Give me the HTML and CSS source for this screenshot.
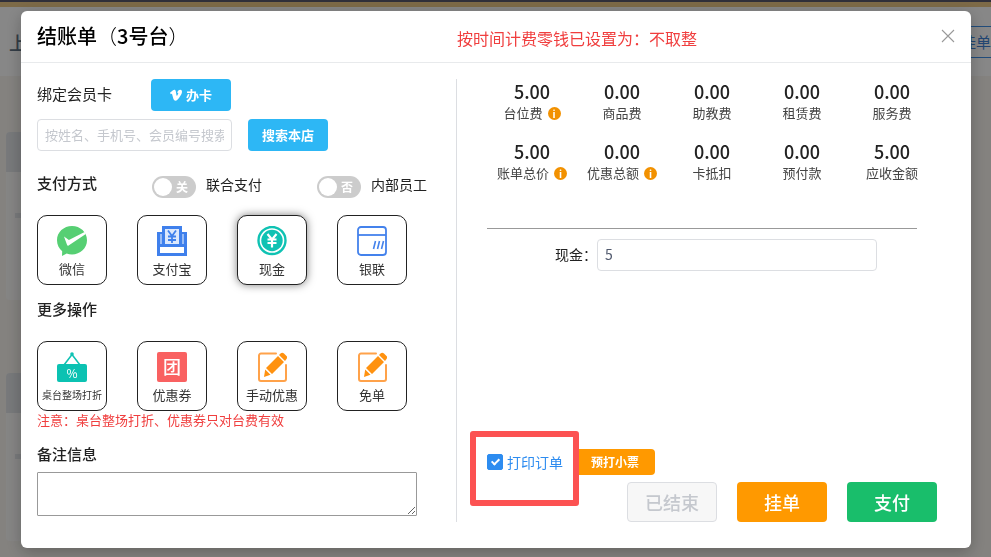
FILE: index.html
```
<!DOCTYPE html>
<html lang="zh-CN">
  <head>
    <meta charset="UTF-8" />
    <meta name="viewport" content="width=device-width, initial-scale=1.0" />
    <title>结账单</title>
    <link rel="stylesheet" href="styles.css">
  </head>
  <body>
    <!-- page under the dialog -->
    <div class="page" aria-hidden="true">
      <div class="topbar"></div>
      <div class="toolbar">
        <span class="toolbar-title">上</span>
        <span class="toolbar-btn">挂单</span>
      </div>
      <div class="tables">
        <div class="table-card"><div class="table-head"></div><div class="table-seat"></div></div>
        <div class="table-card"><div class="table-head"></div><div class="table-seat"></div></div>
      </div>
    </div>

    <div class="overlay">
      <div class="modal" role="dialog" aria-labelledby="modalTitle">
        <div class="modal-header">
          <h1 id="modalTitle">结账单<span class="thin">（</span>3号台<span class="thin">）</span></h1>
          <p class="tip">按时间计费零钱已设置为：不取整</p>
          <button type="button" class="close" id="closeBtn" aria-label="关闭">
            <svg width="14" height="14" viewBox="0 0 14 14" fill="none" stroke="#999" stroke-width="1.1">
              <path d="M1 1l12 12M13 1l-12 12" />
            </svg>
          </button>
        </div>

        <div class="modal-body">
          <div class="left">
            <div class="card-row">
              <label for="member">绑定会员卡</label>
              <button type="button" class="btn btn-blue">
                <svg width="12" height="12" viewBox="0 0 24 24" fill="#fff">
                  <path d="M0 7.500L6 2.600c2.800-2 5-1.300 5.700 2.200l1.100 7.200c.5 2 1 2 2 .4l1.300-2.600c1-2-.2-2.600-2-1.900C15.500 3.500 18 1.500 20.700 1.700c2.600.2 3.600 2 3.200 5-.5 4.300-6 12.500-9.500 15.500-2.900 2.200-6.600 1.200-7.700-2.700L4.200 10.300c-.4-1.400-1.300-1-2.600 0z" />
                </svg>
                办卡
              </button>
            </div>
            <div class="search-row">
              <input type="text" id="member" class="input" placeholder="按姓名、手机号、会员编号搜索" />
              <button type="button" class="btn btn-blue">搜索本店</button>
            </div>

            <div class="pay-row">
              <h2>支付方式</h2>
              <label class="switch">
                <span class="switch-box"><input type="checkbox" role="switch" /><span class="switch-text">关</span></span>
                联合支付
              </label>
              <label class="switch">
                <span class="switch-box"><input type="checkbox" role="switch" /><span class="switch-text">否</span></span>
                内部员工
              </label>
            </div>

            <div class="tiles" id="payTiles">
              <button type="button" class="tile">
                <svg width="30" height="30" viewBox="0 0 30 30">
                  <path fill="#56cf73" d="M15 0C23.300 0 30 6.200 30 14.200S23.300 28.400 15 28.400c-2 0-3.700-.3-5.300-.9L5 30l.2-4.700C2 22.600 0 18.700 0 14.200 0 6.200 6.700 0 15 0z" />
                  <path fill="#fff" d="M7 10.600l4.900 3.300L27.600 6l1.200 1.900L11.600 19.600c-.7.400-1.200.2-1.500-.5z" />
                </svg>
                <span>微信</span>
              </button>
              <button type="button" class="tile">
                <svg width="30" height="30" viewBox="0 0 30 30">
                  <path fill="#3f80ec" d="M5 0h20v6h5v24H0V6h5z" />
                  <path fill="#dce8fc" d="M8 3h14v15H8z" />
                  <path fill="#fff" d="M3 21h24v6H3z" />
                  <path stroke="#b9d1f9" stroke-width="1.500" d="M4 8v10M26 8v10" />
                  <path fill="none" stroke="#3f80ec" stroke-width="1.800" d="M11 4.500l4 5.500 4-5.500M15 10v7M11 10.500h8M11 14h8" />
                </svg>
                <span>支付宝</span>
              </button>
              <button type="button" class="tile active">
                <svg width="30" height="30" viewBox="0 0 30 30">
                  <circle cx="15" cy="14.500" r="13.500" fill="#fff" stroke="#0fc2b3" stroke-width="2.400" />
                  <circle cx="15" cy="14.500" r="10.700" fill="#0fc2b3" />
                  <path fill="none" stroke="#fff" stroke-width="2.200" d="M10.500 8l4.500 5.500L19.500 8M15 13.500v8M10.500 13.500h9M10.500 17h9" />
                </svg>
                <span>现金</span>
              </button>
              <button type="button" class="tile">
                <svg width="30" height="30" viewBox="0 0 30 30" fill="none" stroke="#4482ec" stroke-width="1.800">
                  <rect x="1" y="1" width="28" height="28" rx="3" />
                  <path d="M1 9h28" />
                  <path stroke-width="1.600" d="M18.500 15l-2 8M22.500 15l-2 8M26.500 15l-2 8" />
                </svg>
                <span>银联</span>
              </button>
            </div>

            <h2 class="more-title">更多操作</h2>
            <div class="tiles">
              <button type="button" class="tile">
                <svg width="30" height="30" viewBox="0 0 30 30">
                  <path fill="none" stroke="#0fc2b3" stroke-width="1.600" d="M7 13l8-10.500L23 13" />
                  <circle cx="15" cy="2" r="1.800" fill="#0fc2b3" />
                  <rect y="12" width="30" height="18" rx="2" fill="#0bc2b2" />
                  <text x="15" y="25.500" text-anchor="middle" font-size="12" fill="#fff">%</text>
                </svg>
                <span class="small">桌台整场打折</span>
              </button>
              <button type="button" class="tile">
                <svg width="30" height="30" viewBox="0 0 30 30">
                  <rect width="30" height="30" rx="2" fill="#f96161" />
                  <text x="15" y="21.500" text-anchor="middle" font-size="18" font-weight="500" fill="#fff">团</text>
                </svg>
                <span>优惠券</span>
              </button>
              <button type="button" class="tile">
                <svg width="30" height="30" viewBox="0 0 30 30">
                  <path fill="none" stroke="#ffa24a" stroke-width="2" stroke-linecap="round" d="M19 1.500H4a2 2 0 0 0-2 2V27a2 2 0 0 0 2 2h23a2 2 0 0 0 2-2V13" />
                  <path fill="#ff9210" d="M21 4l6 6-12 12-6-6zM8.200 17.500l5.300 5.300L7 25zM22 3l1.500-1.500c1-1 2.500-1 3.500 0L29.500 4c1 1 1 2 0 3L28 9z" />
                </svg>
                <span>手动优惠</span>
              </button>
              <button type="button" class="tile">
                <svg width="30" height="30" viewBox="0 0 30 30">
                  <path fill="none" stroke="#ffa24a" stroke-width="2" stroke-linecap="round" d="M19 1.500H4a2 2 0 0 0-2 2V27a2 2 0 0 0 2 2h23a2 2 0 0 0 2-2V13" />
                  <path fill="#ff9210" d="M21 4l6 6-12 12-6-6zM8.200 17.500l5.300 5.300L7 25zM22 3l1.500-1.500c1-1 2.500-1 3.500 0L29.500 4c1 1 1 2 0 3L28 9z" />
                </svg>
                <span>免单</span>
              </button>
            </div>
            <p class="note">注意：桌台整场打折、优惠券只对台费有效</p>

            <label for="remark" class="remark-title">备注信息</label>
            <textarea id="remark"></textarea>
          </div>

          <div class="right">
            <dl class="amounts">
              <div><dd>5.00</dd><dt>台位费 <span class="info">i</span></dt></div>
              <div><dd>0.00</dd><dt>商品费</dt></div>
              <div><dd>0.00</dd><dt>助教费</dt></div>
              <div><dd>0.00</dd><dt>租赁费</dt></div>
              <div><dd>0.00</dd><dt>服务费</dt></div>
              <div><dd>5.00</dd><dt>账单总价 <span class="info">i</span></dt></div>
              <div><dd>0.00</dd><dt>优惠总额 <span class="info">i</span></dt></div>
              <div><dd>0.00</dd><dt>卡抵扣</dt></div>
              <div><dd>0.00</dd><dt>预付款</dt></div>
              <div><dd>5.00</dd><dt>应收金额</dt></div>
            </dl>
            <hr />
            <div class="cash-row">
              <label for="cash">现金：</label>
              <input type="text" id="cash" class="input" value="5" />
            </div>

            <div class="print-row">
              <label class="print">
                <input type="checkbox" checked />
                打印订单
              </label>
              <button type="button" class="btn btn-orange btn-small">预打小票</button>
              <span class="mark"></span>
            </div>
            <div class="actions">
              <button type="button" class="btn btn-large" disabled>已结束</button>
              <button type="button" class="btn btn-large btn-orange">挂单</button>
              <button type="button" class="btn btn-large btn-green">支付</button>
            </div>
          </div>
        </div>
      </div>
    </div>

    <script>
      // Select payment method
      document.querySelectorAll("#payTiles .tile").forEach((tile) => {
        tile.addEventListener("click", function () {
          document.querySelector("#payTiles .active").classList.remove("active");
          this.classList.add("active");
        });
      });

      // Close dialog
      document
        .getElementById("closeBtn")
        .addEventListener("click", function () {
          document.querySelector(".overlay").style.display = "none";
        });
    </script>
  </body>
</html>
```

FILE: styles.css
```
* {
  margin: 0;
  padding: 0;
  box-sizing: border-box;
}

body {
  font-family: "Noto Sans CJK SC", "Noto Sans", sans-serif;
  font-size: 14px;
  line-height: 20px;
  color: #222;
  background: #f0ede8;
}

button,
input,
textarea {
  font-family: inherit;
}

button {
  cursor: pointer;
}

/* page behind */
.page {
  position: fixed;
  inset: 0;
  overflow: hidden;
}

.topbar {
  height: 7px;
  background: #e3c182;
  border-top: 2px solid #56566a;
}

.toolbar {
  display: flex;
  align-items: center;
  justify-content: space-between;
  height: 69px;
  padding-left: 9px;
  background: #f6f6f6;
}

.toolbar-title {
  font-size: 18px;
  font-weight: 500;
  color: #5d6f80;
}

.toolbar-btn {
  padding: 5px 0 5px 30px;
  border: 1px solid #3d8be0;
  border-right: none;
  font-size: 15px;
  color: #3d7fd0;
}

.tables {
  display: flex;
  flex-direction: column;
  gap: 73px;
  padding: 56px 6px;
}

.table-card {
  width: 160px;
  height: 168px;
  border-radius: 4px;
  background: #f3f2f1;
  overflow: hidden;
}

.table-head {
  height: 40px;
  background: #dadde0;
}

.table-seat {
  width: 40px;
  height: 5px;
  margin: 41px 9px;
  background: #dcdfe2;
}

/* dialog */
.overlay {
  position: relative;
  min-height: 100vh;
  padding: 11px 20px 9px 21px;
  background: rgba(0, 0, 0, 0.45);
}

.modal {
  border-radius: 6px;
  background: #fff;
  box-shadow: 0 4px 16px rgba(0, 0, 0, 0.25);
}

.modal-header {
  display: flex;
  align-items: center;
  height: 52px;
  padding: 0 16px 2px;
  border-bottom: 1px solid #e8eaec;
}

.modal-header h1 {
  flex: 0 0 420px;
  font-size: 20px;
  line-height: 28px;
  font-weight: 500;
  color: #000;
}

.thin {
  font-weight: 300;
}

.tip {
  flex: 1;
  padding-top: 4px;
  font-size: 16px;
  color: #f03e3e;
}

.close {
  display: flex;
  border: none;
  background: none;
}

.modal-body {
  display: flex;
  padding: 16px 16px 26px;
}

.left {
  flex: 0 0 420px;
  border-right: 1px solid #dcdee2;
}

.right {
  flex: 1;
  display: flex;
  flex-direction: column;
  padding: 0 18px 0 30px;
}

.btn {
  display: inline-flex;
  align-items: center;
  justify-content: center;
  gap: 4px;
  width: 80px;
  height: 32px;
  padding-bottom: 1px;
  border: none;
  border-radius: 4px;
  color: #fff;
  font-size: 13px;
  font-weight: 700;
}

.btn-blue {
  background: #2db7f5;
}

.btn-orange {
  background: #ff9900;
}

.btn-green {
  background: #19be6b;
}

.btn-small {
  height: 26px;
  font-size: 12px;
}

.btn-large {
  width: 90px;
  height: 40px;
  font-size: 18px;
  font-weight: 500;
}

.btn:disabled {
  border: 1px solid #dcdee2;
  background: #f7f7f7;
  color: #c5c8ce;
  cursor: not-allowed;
}

.input {
  height: 32px;
  padding: 0 7px 2px;
  border: 1px solid #dcdee2;
  border-radius: 4px;
  font-size: 14px;
  color: #515a6e;
}

.input:focus {
  outline: none;
  border-color: #2db7f5;
}

.input::placeholder {
  color: #c5c8ce;
}

.card-row {
  display: flex;
  align-items: center;
  margin-bottom: 8px;
  font-size: 15px;
}

.card-row label {
  width: 114px;
  padding-bottom: 2px;
}

.search-row {
  display: flex;
  gap: 16px;
}

.search-row .input {
  width: 195px;
  font-size: 13px;
}

h2,
.remark-title {
  font-size: 15px;
  line-height: 20px;
  font-weight: 500;
}

.pay-row {
  display: flex;
  align-items: flex-start;
  margin: 21px 0 17px;
}

.pay-row h2 {
  width: 115px;
  padding-top: 1px;
}

.switch {
  display: flex;
  gap: 10px;
  width: 165px;
  padding-top: 2px;
}

.switch:last-child {
  width: auto;
}

.switch-box {
  position: relative;
  display: flex;
  padding-top: 2px;
}

.switch-box input {
  appearance: none;
  width: 44px;
  height: 22px;
  padding: 2px;
  border-radius: 11px;
  background: #ccc;
  cursor: pointer;
}

.switch-box input::before {
  content: "";
  display: block;
  width: 18px;
  height: 18px;
  border-radius: 50%;
  background: #fff;
}

.switch-box input:checked {
  padding-left: 24px;
  background: #2d8cf0;
}

.switch-text {
  position: absolute;
  top: 3px;
  right: 8px;
  font-size: 12px;
  font-weight: 700;
  color: #fff;
}

.tiles {
  display: flex;
  gap: 30px;
}

.tile {
  display: flex;
  flex-direction: column;
  align-items: center;
  gap: 3px;
  width: 70px;
  height: 70px;
  padding-top: 10px;
  border: 1px solid #222;
  border-radius: 10px;
  background: #fff;
  font-size: 13px;
  line-height: 20px;
  color: #333;
  white-space: nowrap;
}

.tile.active {
  box-shadow: 0 0 8px rgba(0, 0, 0, 0.5);
}

.tile .small {
  font-size: 10px;
}

.more-title {
  margin: 14px 0 22px;
}

.note {
  margin-bottom: 15px;
  font-size: 13px;
  line-height: 18px;
  color: #f03e3e;
}

.remark-title {
  display: block;
  margin-bottom: 8px;
}

textarea {
  display: block;
  width: 380px;
  height: 44px;
  margin-bottom: 6px;
  padding: 4px;
  border: 1px solid #999;
  border-radius: 1px;
}

.amounts {
  display: grid;
  grid-template-columns: repeat(5, 1fr);
  text-align: center;
}

.amounts > div {
  height: 60px;
  padding-top: 1px;
}

.amounts dd {
  font-size: 18px;
  line-height: 22px;
  font-weight: 500;
}

.amounts dt {
  display: flex;
  align-items: center;
  justify-content: center;
  gap: 5px;
  font-size: 13px;
  line-height: 22px;
  color: #444;
}

.info {
  width: 13px;
  height: 13px;
  border-radius: 50%;
  background: #f29100;
  color: #fff;
  font-size: 10px;
  line-height: 13px;
  font-weight: 700;
}

hr {
  margin: 29px 20px 10px 0;
  border: none;
  border-top: 1px solid #999;
}

.cash-row {
  display: flex;
  align-items: center;
  justify-content: flex-end;
  padding-right: 60px;
}

.cash-row label {
  padding-bottom: 2px;
}

.cash-row .input {
  width: 280px;
}

.print-row {
  position: relative;
  display: flex;
  align-items: center;
  gap: 12px;
  margin-top: auto;
  margin-bottom: 7px;
}

.print {
  display: flex;
  align-items: center;
  gap: 4px;
  padding-bottom: 1px;
  color: #2d8cf0;
}

.print input {
  appearance: none;
  display: flex;
  justify-content: center;
  width: 16px;
  height: 16px;
  border: 1px solid #dcdee2;
  border-radius: 2px;
}

.print input:checked {
  border-color: #2d8cf0;
  background: #2d8cf0;
}

.print input:checked::after {
  content: "";
  width: 5px;
  height: 8px;
  margin-top: 2px;
  border: solid #fff;
  border-width: 0 2px 2px 0;
  box-sizing: border-box;
  transform: rotate(45deg);
}

/* frame around the print option */
.mark {
  position: absolute;
  left: -17px;
  top: -18px;
  width: 109px;
  height: 75px;
  border: 6px solid #fc5252;
  border-radius: 3px;
  pointer-events: none;
}

.actions {
  display: flex;
  justify-content: flex-end;
  gap: 20px;
}
```
